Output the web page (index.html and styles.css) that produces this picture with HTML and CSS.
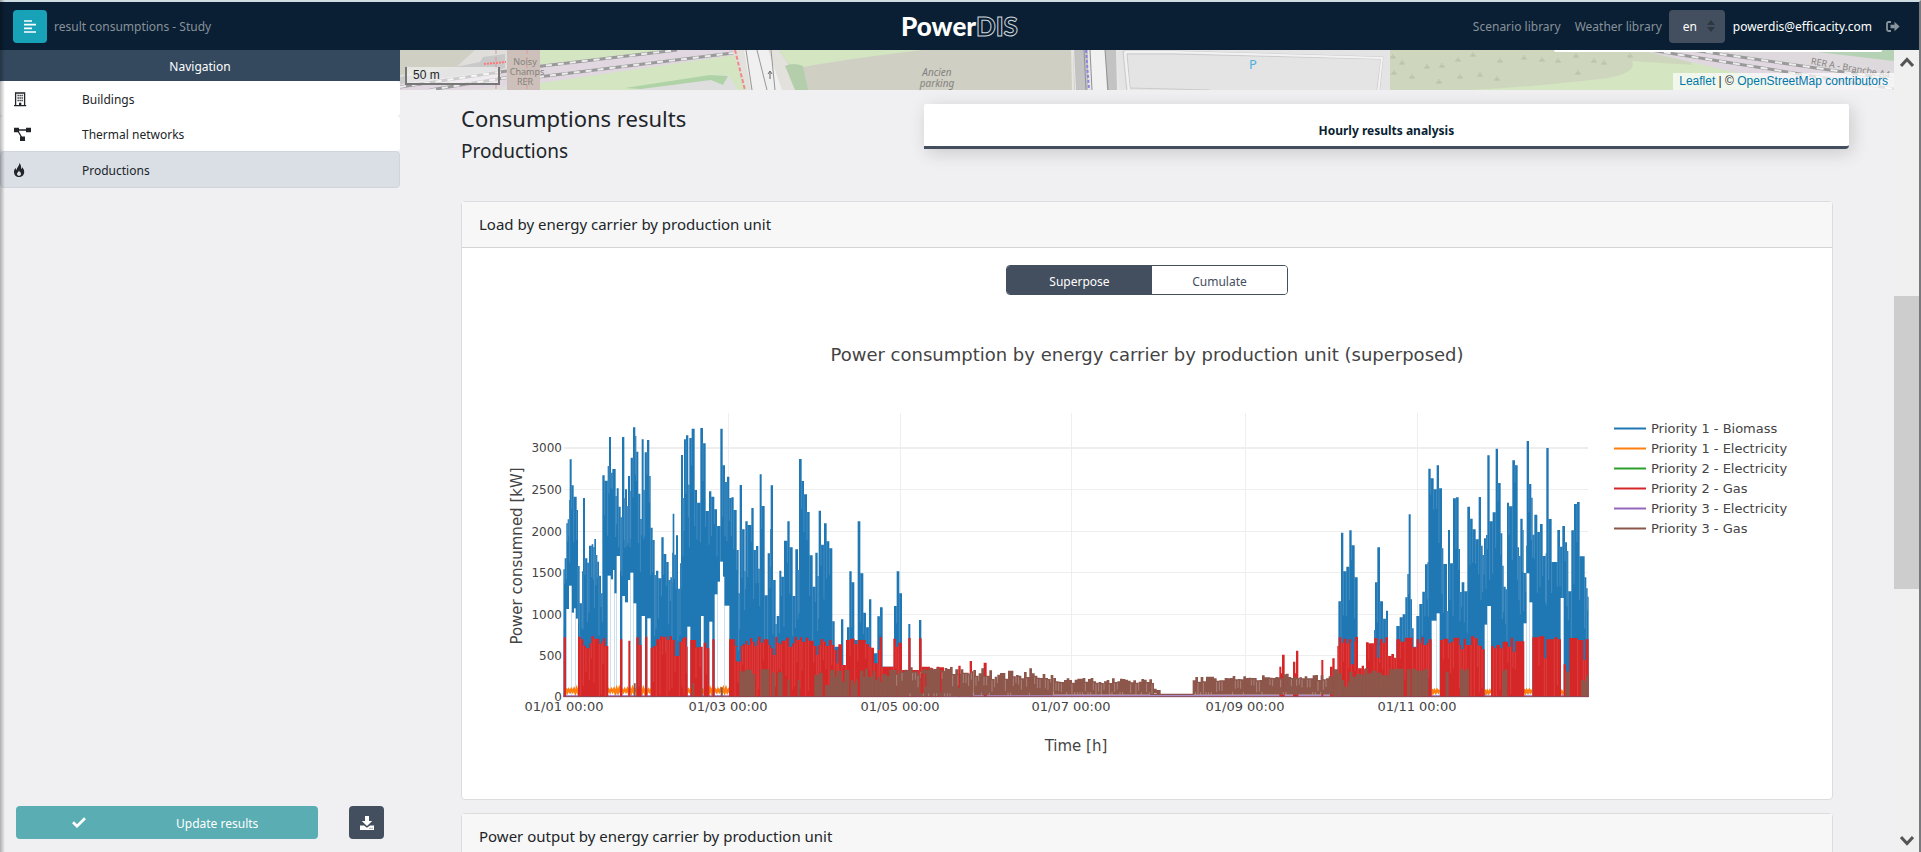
FILE: index.html
```html
<!DOCTYPE html>
<html lang="en">
<head>
<meta charset="utf-8">
<title>PowerDIS - result consumptions</title>
<link rel="stylesheet" href="styles.css">
</head>
<body>
<div class="app">
  <header class="topbar">
    <div class="topbar-left">
      <button class="menu-btn" type="button" aria-label="Toggle navigation">
        <svg width="12" height="13" viewBox="0 0 12 13"><path d="M0 1h8M0 4.7h12M0 8.4h8M0 12h12" stroke="#fff" stroke-width="1.7"/></svg>
      </button>
      <span class="study">result consumptions - Study</span>
    </div>
    <a class="logo" href="#">Power<span class="logo-outline">DIS</span></a>
    <nav class="topbar-right">
      <a href="#">Scenario library</a>
      <a href="#">Weather library</a>
      <span class="lang">
        <select aria-label="Language"><option>en</option><option>fr</option></select>
        <svg class="lang-caret" width="8" height="12" viewBox="0 0 8 12"><path d="M0 5l4-5 4 5zM0 7l4 5 4-5z" fill="#2e3740"/></svg>
      </span>
      <a class="user" href="#">powerdis@efficacity.com</a>
      <a class="logout" href="#" aria-label="Log out">
        <svg width="14" height="12" viewBox="0 0 14 12"><path d="M5 1H2.5A1.5 1.5 0 0 0 1 2.500v6A1.500 1.500 0 0 0 2.500 10H5" fill="none" stroke="#8a949d" stroke-width="1.800"/><path d="M4.500 3.800h4V.8L13.600 5.500 8.500 10.300v-3h-4z" fill="#8a949d"/></svg>
      </a>
    </nav>
  </header>

  <div class="body">
    <aside class="sidebar">
      <h2 class="nav-title">Navigation</h2>
      <nav class="nav-list">
        <a class="nav-item" href="#">
          <svg width="18" height="15" viewBox="0 0 18 15"><path d="M1.600 13.500V1h9v12.500M0 13.700h12.200" fill="none" stroke="#212529" stroke-width="1.300"/><path d="M3.500 3.500h5.300M3.500 6h5.300M3.500 8.500h5.300" stroke="#212529" stroke-width="1.500" stroke-dasharray="1.300 .7"/><path d="M5 14v-3.300h2.300V14z" fill="#212529"/></svg>
          <span>Buildings</span>
        </a>
        <a class="nav-item" href="#">
          <svg width="18" height="15" viewBox="0 0 18 15"><path d="M3 3h11M4 4l4 7" stroke="#212529" stroke-width="1.300"/><path d="M0 .7h5v4.600H0zM12 .7h5v4.600h-5zM6 9.500h5V14H6z" fill="#212529"/></svg>
          <span>Thermal networks</span>
        </a>
        <a class="nav-item active" href="#">
          <svg width="18" height="15" viewBox="0 0 18 15"><path fill-rule="evenodd" d="M5 0C6 2.600 2.800 4 2.600 7 1.700 6.500 1.600 5.500 1.700 4.700.6 6 0 7.300 0 9c0 3 2.200 5 5 5s5.200-2 5.200-5c0-2-1-3.500-2-4.700-.1.900-.5 1.500-1.100 1.800C7.500 3.500 6.800 1 5 0zM5 7.600C5.300 9 7 9.300 7 11c0 1.200-.9 1.800-2 1.800s-2-.7-2-1.800c0-1.500 1.600-2 2-3.400z" fill="#212529"/></svg>
          <span>Productions</span>
        </a>
      </nav>
      <div class="side-actions">
        <button class="update-btn" type="button">
          <svg width="14" height="11" viewBox="0 0 14 11"><path d="M1 5.300l4 3.900L13 1.300" fill="none" stroke="#fff" stroke-width="2.700"/></svg>
          <span>Update results</span>
        </button>
        <button class="download-btn" type="button" aria-label="Download">
          <svg width="14" height="14" viewBox="0 0 14 14"><path d="M5 0h4v5h3.200L7 10 1.800 5H5z" fill="#fff"/><path d="M0 9.500h4l3 2.200 3-2.200h4V14H0z" fill="#fff"/><path d="M9.500 12.300h1M11.600 12.300h1" stroke="#434e5e"/></svg>
        </button>
      </div>
    </aside>

    <main class="main">
      <section class="map" aria-label="Map">
        <svg class="map-tiles" width="100%" height="40" viewBox="0 0 1494 40" preserveAspectRatio="xMinYMin slice">
          <rect width="1494" height="40" fill="#cfcfc4"/>
          <path d="M0 40V25L55 18 75 0h70v40z" fill="#dfdeda"/>
          <path d="M50 18l30-6 3-5 22-3v14L60 33 0 37V27z" fill="#c9c9c9"/>
          <path d="M138 0h196l10 40H138z" fill="#d3e5c1"/>
          <path d="M0 40v-6L136 15 270 0h65v5L140 33 60 40z" fill="#e0d7e0"/>
          <path d="M0 37L107 21M30 40l80-13M134 17L277 0M138 27L333 3" stroke="#999" stroke-width="3" fill="none"/>
          <path d="M0 37L107 21M30 40l80-13M134 17L277 0M138 27L333 3" stroke="#ededed" stroke-width="2" stroke-dasharray="6 6" fill="none"/>
          <path d="M107 0h33v40h-33z" fill="#cdc0ba"/>
          <path d="M127 0v40M96 0v40" stroke="#d99" stroke-dasharray="4 3"/>
          <path d="M235 40l80-15 13 0 10 15z" fill="#dedede"/>
          <path d="M225 38l85-13 18 1-5 9-12-5-70 9z" fill="#afd2a6"/>
          <path d="M84 14l22-2" stroke="#ff7878" stroke-width="2" stroke-dasharray="2 1"/>
          <path d="M333 0h46l27 40h-61z" fill="#e2e1dc"/>
          <path d="M344 0h24l14 40h-31z" fill="#f0f0f0"/>
          <path d="M346 0l6 40M357 0l10 40M371 0l4 40" stroke="#969696" fill="none"/>
          <path d="M335 0l10 40" stroke="#f08a8a" stroke-width="2" stroke-dasharray="4 2"/>
          <path d="M370 29v-7M368 24l2-3 2 3" stroke="#666" fill="none"/>
          <path d="M379 0h144q-70 8-120 17l-10 3z" fill="#d3e5c1"/>
          <path d="M385 16q8-4 18 0l5 24h-13z" fill="#b4ceac"/>
          <path d="M671 0h2l1 40h-2z" fill="#e6e5df"/>
          <path d="M673 0h50v40h-48z" fill="#e8e8e6"/>
          <path d="M674 0h14v40h-12zM705 0h11l1 40h-11z" fill="#c3c3c3"/>
          <path d="M691 0h14l2 40h-15z" fill="#f1f1f1"/>
          <path d="M690 0l2 40M705 0l3 40M684 0l2 40" stroke="#929292" fill="none"/>
          <path d="M686 0l3 40" stroke="#8c83e6" stroke-width="2" stroke-dasharray="3 2"/>
          <path d="M717 0h273v40H719z" fill="#e4e4e4"/>
          <path d="M723 1l50 0 210 6-4 40M723 1l4 42M727 4l46 0 208 5-4 31M727 4l3 34 80 2" fill="none" stroke="#cbcbcb"/>
          <path d="M725 2l48 0 209 6-4 36M725 2l4 40" fill="none" stroke="#f2f2f2" stroke-width="2"/>
          <path d="M990 0h350v40H990z" fill="#ced6bd"/>
          <path d="M1110 40l190-12-10-17 180 12 24 17z" fill="#d3e5c1"/>
          <path d="M1070 40q60-3 130-11 38-5 32-18l155 10-8 19z" fill="#d3e5c1"/>
          <path d="M1240 0h254v40h-80l-90-20z" fill="#ded9dc"/>
          <path d="M1240 0h70l184 33v7h-60z" fill="#e0d7e0"/>
          <path d="M1400 0h94v11z" fill="#b6d2b5"/>
          <path d="M1250 0l244 39M1292 0l200 29" stroke="#999" stroke-width="3"/>
          <path d="M1250 0l244 39M1292 0l200 29" stroke="#ededed" stroke-width="2" stroke-dasharray="7 7"/>
          <g stroke="#b5c2a5" stroke-width="1" fill="none">
            <path id="tree" d="M1002 10v4h-3M1002 14h3M1000 12l2 2 2-2"/>
            <use href="#tree" x="-9" y="-6"/><use href="#tree" x="-8" y="10"/><use href="#tree" x="10" y="14"/><use href="#tree" x="25" y="4"/><use href="#tree" x="40" y="3"/><use href="#tree" x="37" y="19"/><use href="#tree" x="56" y="-3"/><use href="#tree" x="58" y="14"/><use href="#tree" x="71" y="-8"/><use href="#tree" x="78" y="12"/><use href="#tree" x="95" y="16"/><use href="#tree" x="98" y="-2"/><use href="#tree" x="122" y="-5"/><use href="#tree" x="140" y="-3"/><use href="#tree" x="156" y="-2"/><use href="#tree" x="176" y="10"/><use href="#tree" x="192" y="-2"/><use href="#tree" x="174" y="-7"/><use href="#tree" x="202" y="0"/><use href="#tree" x="228" y="-7"/>
          </g>
          <g class="map-label">
            <text x="125" y="15">Noisy</text><text x="127" y="25">Champs</text><text x="125" y="35">RER</text>
            <text class="it" x="537" y="26">Ancien</text><text class="it" x="537" y="37">parking</text>
            <text x="1450" y="21" transform="rotate(10 1450 21)">RER A - Branche A4</text>
          </g>
          <text class="parking" x="853" y="19">P</text>
          <path d="M1154 0h328v1q0 1-2 1h-324q-2 0-2-2z" fill="#fff"/>
        </svg>
        <div class="map-scale">50 m</div>
        <div class="map-credit"><a href="#">Leaflet</a> | © <a href="#">OpenStreetMap contributors</a></div>
      </section>

      <div class="content">
        <div class="heading-row">
          <div>
            <h1>Consumptions results</h1>
            <h2>Productions</h2>
          </div>
          <button class="tab" type="button">Hourly results analysis</button>
        </div>

        <section class="card">
          <h3 class="card-head">Load by energy carrier by production unit</h3>
          <div class="card-body">
            <div class="toggle">
              <button class="on" type="button">Superpose</button>
              <button type="button">Cumulate</button>
            </div>
            <svg class="chart" viewBox="462 295 1370 485" role="img" aria-label="Power consumption by energy carrier by production unit">
              <text class="c-title" x="1147" y="361">Power consumption by energy carrier by production unit (superposed)</text>
              <g stroke="#eee">
                <path d="M728.500 413v284M900.500 413v284M1071.500 413v284M1245.500 413v284M1417.500 413v284M564 489.500h1024M564 531.500h1024M564 572.500h1024M564 614.500h1024M564 655.500h1024"/>
                <path d="M564 448h1024" stroke-width="2"/>
              </g>
              <g id="plot" transform="translate(500 400) scale(.33333)"></g>
              <g class="c-tick end">
                <text x="562" y="452">3000</text><text x="562" y="494">2500</text><text x="562" y="536">2000</text><text x="562" y="577">1500</text><text x="562" y="619">1000</text><text x="562" y="660">500</text><text x="562" y="701">0</text>
              </g>
              <g class="c-tick mid">
                <text x="564" y="711">01/01 00:00</text><text x="728" y="711">01/03 00:00</text><text x="900" y="711">01/05 00:00</text><text x="1071" y="711">01/07 00:00</text><text x="1245" y="711">01/09 00:00</text><text x="1417" y="711">01/11 00:00</text>
              </g>
              <text class="c-axis" x="1076" y="751">Time [h]</text>
              <text class="c-axis" transform="translate(522 556) rotate(-90)">Power consumned [kW]</text>
              <g stroke-width="2">
                <path d="M1614 428.500h32" stroke="#1f77b4"/><path d="M1614 448.500h32" stroke="#ff7f0e"/><path d="M1614 468.500h32" stroke="#2ca02c"/><path d="M1614 488.500h32" stroke="#d62728"/><path d="M1614 508.500h32" stroke="#9467bd"/><path d="M1614 528.500h32" stroke="#8c564b"/>
              </g>
              <g class="c-tick">
                <text x="1651" y="433">Priority 1 - Biomass</text><text x="1651" y="453">Priority 1 - Electricity</text><text x="1651" y="473">Priority 2 - Electricity</text><text x="1651" y="493">Priority 2 - Gas</text><text x="1651" y="513">Priority 3 - Electricity</text><text x="1651" y="533">Priority 3 - Gas</text>
              </g>
            </svg>
          </div>
        </section>

        <section class="card">
          <h3 class="card-head">Power output by energy carrier by production unit</h3>
          <div class="card-body"></div>
        </section>
      </div>
    </main>

    <div class="scroll" aria-hidden="true">
      <svg width="14" height="10" viewBox="0 0 14 10"><path d="M1 9l6-6.500L13 9" fill="none" stroke="#555" stroke-width="3"/></svg>
      <div class="scroll-track"><div class="scroll-thumb"></div></div>
      <svg width="14" height="10" viewBox="0 0 14 10"><path d="M1 1l6 6.500L13 1" fill="none" stroke="#555" stroke-width="3"/></svg>
    </div>
  </div>
</div>
<script src="chart.js"></script>
</body>
</html>
```
FILE: styles.css
```css
* { box-sizing: border-box; }

body {
  margin: 0;
  background: #f0f0f2;
  color: #212529;
  font: 12px/20px "Noto Sans", "Open Sans", sans-serif;
}

a { color: inherit; text-decoration: none; }
button { font: inherit; cursor: pointer; border: 0; }
h1, h2, h3 { margin: 0; font-weight: 400; }
svg { display: block; flex: none; }

.app {
  display: flex;
  flex-direction: column;
  height: 100vh;
  overflow: hidden;
  border-top: 2px solid #cfdde2;
  border-right: 2px solid #77797c;
}

.app::after {
  content: "";
  position: fixed;
  inset: 0 auto 0 0;
  width: 5px;
  background: linear-gradient(90deg, rgba(0, 0, 0, .28), rgba(0, 0, 0, 0));
  pointer-events: none;
}

.topbar {
  display: grid;
  grid-template-columns: 1fr auto 1fr;
  align-items: center;
  flex: none;
  height: 48px;
  padding: 0 19px 0 13px;
  background: #0a1f33;
  color: #87919a;
}

.topbar-left { display: flex; align-items: center; gap: 7px; }
.topbar-left .study, .topbar-right > a { padding-top: 2px; }
.topbar-right { display: flex; align-items: center; justify-content: flex-end; }
.topbar-right > a { margin-right: 14px; }
.topbar-right > a:nth-child(2) { margin-right: 7px; }

.menu-btn {
  display: flex;
  align-items: center;
  justify-content: center;
  width: 34px;
  height: 33px;
  padding: 0;
  border-radius: 4px;
  background: #17a2b8;
}

.logo {
  margin-left: 6px;
  color: #fff;
  font: 900 26px/30px Lato, sans-serif;
}

.logo-outline {
  color: transparent;
  -webkit-text-stroke: 1px #ccd4d9;
}

.lang { position: relative; margin-right: 8px; }

.lang select {
  display: block;
  width: 56px;
  height: 33px;
  padding: 2px 14px 0;
  border: 0;
  border-radius: 4px;
  appearance: none;
  background: #434e5e;
  color: #fff;
  font: inherit;
}

.lang-caret { position: absolute; right: 10px; top: 10px; pointer-events: none; }
.topbar-right > .user { color: #fff; }
.topbar-right > .logout { margin-right: 0; }

.body { display: flex; flex: 1; min-height: 0; }

.sidebar { display: flex; flex-direction: column; flex: 0 0 400px; }

.nav-title {
  padding: 7px 0 4px;
  background: #34495e;
  color: #fff;
  font-size: 12px;
  line-height: 20px;
  text-align: center;
}

.nav-item {
  display: flex;
  align-items: center;
  gap: 50px;
  height: 35px;
  padding: 2px 14px 0;
  border-radius: 4px;
  background: #fff;
}

.nav-item.active {
  height: 37px;
  border: 1px solid #cfd4dd;
  padding: 2px 13px 0;
  background: #dadfe6;
}

.side-actions {
  display: flex;
  gap: 31px;
  margin-top: auto;
  padding: 0 16px 13px;
}

.update-btn {
  display: flex;
  align-items: center;
  width: 302px;
  height: 33px;
  padding: 0 0 0 56px;
  border-radius: 4px;
  background: #5aadb3;
  color: #fff;
  gap: 90px;
}

.update-btn span { padding-top: 3px; }

.download-btn {
  display: grid;
  place-items: center;
  width: 35px;
  height: 33px;
  padding: 0;
  border-radius: 4px;
  background: #434e5e;
}

.main { flex: 1; min-width: 0; overflow: hidden; }

.map { position: relative; height: 40px; overflow: hidden; }

.map-label { font: 9px "Noto Sans", sans-serif; fill: #85827e; text-anchor: middle; }
.map-label .it { font-size: 10px; font-style: italic; }
.parking { font: 13px "Noto Sans", sans-serif; fill: #4fb0dc; text-anchor: middle; }

.map-scale {
  position: absolute;
  left: 5px;
  bottom: 5px;
  width: 95px;
  height: 18px;
  padding: 0 6px;
  border: 2px solid #777;
  border-top: 0;
  background: rgba(255, 255, 255, .5);
  font: 12px/17px "Liberation Sans", sans-serif;
}

.map-credit {
  position: absolute;
  right: 0;
  bottom: 0;
  padding: 0 6px;
  background: rgba(255, 255, 255, .7);
  font: 12px/17px "Liberation Sans", sans-serif;
}

.map-credit a { color: #0078a8; }

.content { padding: 14px 61px 0; }

.heading-row {
  display: grid;
  grid-template-columns: 1fr 2fr;
  align-items: start;
  height: 97px;
  margin-right: -16px;
}

h1 { font-size: 22px; line-height: 28px; }
.heading-row h2 { font-size: 19px; line-height: 38px; }

.tab {
  height: 45px;
  padding: 11px 0 0;
  border-bottom: 3px solid #434e5e;
  border-radius: 2px 2px 4px 0;
  background: #fff;
  box-shadow: 3px 4px 18px rgba(0, 0, 0, .16);
  color: #0a1f33;
  font-weight: 700;
}

.card {
  margin-bottom: 13px;
  border: 1px solid #dcdcde;
  border-radius: 4px;
  background: #fff;
}

.card-head {
  padding: 10px 17px;
  border-bottom: 1px solid #d5d5d7;
  background: #f7f7f7;
  font-size: 15px;
  line-height: 25px;
}

.card-body { padding: 17px 0 19px; }

.toggle {
  display: flex;
  width: 282px;
  margin: 0 auto;
  border: 1px solid #434e5e;
  border-radius: 4px;
  overflow: hidden;
}

.toggle button {
  flex: 1 1 135px;
  height: 28px;
  padding: 3px 0 0;
  background: #fff;
  color: #434e5e;
}

.toggle .on { flex-basis: 145px; background: #434e5e; color: #fff; }

.chart { width: 100%; height: auto; font-family: Verdana, "DejaVu Sans", sans-serif; fill: #444; }
.c-title { font-size: 18px; text-anchor: middle; }
.c-tick { font-size: 13px; }
.c-axis { font-size: 15px; text-anchor: middle; }
.end { text-anchor: end; font-size: 12px; }
.mid { text-anchor: middle; }

.scroll {
  display: flex;
  flex-direction: column;
  align-items: center;
  flex: 0 0 25px;
  padding: 7px 0 6px;
  background: #f0f0f0;
}

.scroll-track { flex: 1; width: 100%; padding-top: 229px; }
.scroll-thumb { height: 293px; background: #cdcdcd; }
```
FILE: chart.js
```javascript
// Each series is a list of "x top" steps; a step runs until the next one.
// Units are thirds of a pixel, and the time axis sits at y = BASE.
const BASE = 890;
const NS = 'http://www.w3.org/2000/svg';
const plot = document.getElementById('plot');

function path(d, attrs) {
  const el = document.createElementNS(NS, 'path');
  el.setAttribute('d', d);
  for (const k in attrs) el.setAttribute(k, attrs[k]);
  plot.appendChild(el);
}

function parse(text, dx) {
  return text.trim().split(/\s*,\s*/).map(p => {
    const [x, y] = p.split(' ').map(Number);
    return [x + dx, y];
  });
}

function steps(text, dx, fill, streak) {
  const pts = parse(text, dx);
  let d = `M${pts[0][0]} ${BASE}`;
  let s = '';
  pts.forEach(([x, y], i) => {
    d += `H${x}V${y}`;
    const low = i ? Math.max(y, pts[i - 1][1]) : y;
    const len = 40 + (x * 37 + y * 13) % 150;
    if (low < BASE - 20) s += `M${x} ${low}V${Math.min(low + len, BASE)}`;
  });
  path(d + `V${BASE}Z`, { fill });
  if (streak) path(s, { stroke: streak, 'stroke-width': 2, opacity: .4 });
}

// Areas left open below the lower edge of the biomass series: x0 x1 bottom
function gaps(text, dx) {
  text.trim().split(/\s*,\s*/).forEach(g => {
    const [a, b, y] = g.split(' ').map(Number);
    path(`M${a + dx} ${y}H${b + dx}V${BASE}H${a + dx}Z`, { fill: '#fff' });
  });
}

function wave(a, b, mid) {
  let d = '';
  for (let x = a, i = 0; x <= b; x += 4, i++) {
    d += `${i ? 'L' : 'M'}${x} ${mid + (i % 2 ? 5 : -5) + (i * 7) % 5 - 2}`;
  }
  path(d, { stroke: '#ff7f0e', 'stroke-width': 7, fill: 'none' });
}

// Dense bars with tops scattered round a sloping level
function band(a, b, y0, y1, fill, spread, bottom) {
  let d = `M${a} ${bottom}`;
  let light = '';
  for (let x = a, i = 0; x < b; x += 8, i++) {
    const r = Math.abs(Math.sin(i * 12.9898 + a) * 43758.5453) % 1;
    const y = Math.round(y0 + (y1 - y0) * (x - a) / (b - a) + (r - .5) * spread);
    d += `H${x}V${y}`;
    if (r > .5) light += `M${x} ${y + 4}v${Math.round(r * 35)}`;
    if (r < .3) light += `M${x} ${bottom}v-8`;
  }
  path(d + `H${b}V${bottom}Z`, { fill });
  path(light, { stroke: '#d8c6c2', 'stroke-width': 2, opacity: .6 });
}

const BLUE = '#1f77b4', RED = '#d62728', BROWN = '#8c564b';

steps(`190 508,194 475,199 370,203 358,207 300,209 178,215 256,221 290,230 330,234 498,239 610,246 514,249 294,255 475,262 488,267 437,275 433,280 442,283 417,288 465,292 485,297 527,303 580,307 226,314 242,323 198,327 111,333 218,337 207,347 288,350 265,356 320,362 352,366 111,373 295,375 268,381 318,384 228,390 273,392 173,399 82,406 108,409 155,415 281,421 357,425 118,431 270,434 157,441 120,448 228,452 383,458 420,464 525,468 512,475 535,484 412,491 462,499 486,506 540,511 532,516 458,518 341,523 464,528 406,534 566,540 490,543 165,549 294,552 118,558 106,565 254,568 114,575 86,584 270,591 308,601 84,609 130,617 333,627 274,634 290,643 328,651 378,661 86,668 196,675 246,681 230,688 294,694 292,701 330,710 450,716 580,719 255,726 388,734 513,736 364,743 375,754 324,761 450,768 438,775 506,779 223,785 318,794 586,803 460,810 388,812 256,819 540,827 672,830 648,838 512,844 530,852 422,862 364,869 442,878 588,886 448,894 510,897 177,905 243,912 283,921 336,929 466,938 560,946 458,953 528,956 332,963 434,972 370,980 424,988 445,997 664,1004 740,1023 658,1030 800,1041 682,1048 514,1055 547,1063 720,1073 364,1081 520,1090 638,1098 682,1107 598,1114 760,1132 649,1140 622,1148 800,1182 618,1190 514,1198 580,1206 835,1225 672,1231 835,1257 660,1264 890`, 0, BLUE, '#a9cbe4');
steps(`175 604,183 398,190 514,199 500,208 391,215 436,224 532,233 890,282 690,285 547,292 442,300 604,309 656,318 632,324 890,349 678,359 652,368 643,376 592,382 522,386 343,392 598,396 685,401 740,409 648,418 612,427 575,435 493,442 487,445 206,452 235,461 268,470 196,477 265,486 445,490 492,501 633,504 390,510 490,519 295,528 292,536 447,540 576,545 547,553 574,562 320,570 356,578 388,587 418,596 291,603 437,608 465,612 415,618 405,622 166,629 364,638 337,647 146,654 249,662 400,667 497,671 560,677 568,681 308,687 319,697 181,705 196,713 442,717 468,721 356,728 390,731 519,738 437,740 123,747 252,754 293,758 404,763 344,772 396,780 372,788 468,797 460,799 144,806 357,815 486,832 390,840 440,847 378,855 427,861 453,865 574,874 391,882 312,891 306,899 469,914 532,919 565,923 590,926 890`, 2340, BLUE, '#a9cbe4');

gaps(`199 207 627,207 215 557,215 222 638,222 227 625,227 234 656,323 332 527,332 339 538,339 343 510,343 350 580,350 360 468,367 375 588,375 384 607,384 391 540,391 400 518,400 409 610,425 435 648,442 452 655,562 571 680,603 611 648,628 637 665,644 653 583,653 660 545,660 669 485,669 673 530,673 688 617`, 0);
gaps(`455 470 662,470 479 640,614 622 674,622 633 618,731 740 670,740 748 520,748 757 607,842 851 594`, 2340);

wave(198, 690, 872);
wave(2795, 2822, 874);
wave(2954, 2974, 876);
wave(3072, 3098, 874);
wave(3183, 3192, 876);

path(`M190 888H3266`, { stroke: '#9467bd', 'stroke-width': 5 });

steps(`191 712,198 890,234 710,242 718,250 737,258 745,268 730,274 709,282 716,298 732,304 724,309 715,316 738,325 890,360 718,367 890,385 722,391 890,409 712,417 735,425 890,435 710,442 890,452 743,460 738,469 718,480 709,488 712,497 709,501 720,508 709,516 720,525 768,538 725,546 715,552 712,560 740,563 890,571 720,588 742,600 740,608 890,611 728,619 745,628 890,637 718,644 890,687 718,705 738,714 785,722 738,728 733,737 722,742 735,750 714,757 725,764 738,771 722,775 710,782 728,790 718,806 735,812 745,820 765,826 711,832 728,838 733,844 722,858 713,867 740,877 730,884 710,891 720,900 712,906 725,917 713,925 722,941 738,950 765,955 735,961 718,970 725,978 738,987 720,995 735,1003 750,1011 790,1015 733,1026 795,1038 720,1050 716,1064 732,1073 720,1097 732,1107 740,1113 743,1122 790,1134 750,1139 712,1146 800,1180 716,1188 740,1195 728,1206 810,1225 714,1232 810,1257 715,1265 800,1290 805,1300 815,1310 800,1318 890`, 0, RED, '#e98081');
steps(`31 803,37 890,50 802,72 890,115 797,122 890,149 783,156 890,191 788,200 890,1078 800,1084 820,1086 764,1094 890,1119 785,1126 820,1128 752,1135 890`, 1260, RED, '');
steps(`124 780,130 890,150 800,157 775,164 890,172 738,176 712,184 728,190 716,200 730,206 718,214 725,225 711,234 805,245 797,252 808,258 727,266 730,282 714,292 735,299 717,308 728,316 712,324 768,334 762,342 773,349 718,361 725,375 713,398 742,410 718,418 730,424 712,431 735,440 728,446 718,455 890,480 720,490 716,505 730,512 725,520 713,538 735,543 748,551 716,558 735,573 709,583 715,593 735,598 738,606 748,614 890,633 738,641 745,649 735,660 745,668 725,684 740,692 713,699 755,706 724,733 890,757 712,777 709,793 775,799 718,823 712,832 718,843 890,851 793,858 815,868 714,893 720,910 780,916 718,926 890`, 2340, RED, '#e98081');

// Biomass still visible where the gas series dips
path(`M2552 725h10v68h-10zM2631 735h7v38h-7zM708 740h6v44h-6zM820 745h5v20h-5zM530 745h6v22h-6z`, { fill: BLUE });

steps(`402 850,407 890,577 850,583 890,604 865,608 890,662 862,668 890,718 812,728 817,734 809,756 822,765 890,782 808,808 890,815 818,825 890,833 817,848 890,862 838,869 890,893 840,899 890,943 825,956 818,968 890,975 855,990 810,1005 830,1010 812,1025 845,1033 810,1048 890,1052 840,1060 850,1068 838,1073 890,1080 812,1090 830,1095 806,1104 830,1118 812,1126 840,1133 830,1140 845,1145 822,1160 828,1168 810,1190 806`, 0, BROWN, '#a5554a');
band(1190, 1420, 812, 812, BROWN, 22, 888);
band(1420, 1660, 818, 825, BROWN, 36, 886);
band(1660, 1962, 842, 842, BROWN, 16, 884);
path(`M1262 820h8v60h-8zM1275 820h4v40h-4zM1376 808h4v56h-4zM1320 815h4v60h-4z`, { fill: RED });
path(`M1962 868h6v10h-6zM1972 872h8v10h-8zM1950 883H2082`, { fill: BROWN, stroke: BROWN, 'stroke-width': 4 });
band(2078, 2350, 838, 832, BROWN, 16, 884);
band(2350, 2500, 832, 832, BROWN, 22, 884);
steps(`160 808,175 820,185 840,193 860,203 845,208 815,218 830,228 822,245 824,254 805,262 820,275 812,290 818,305 826,328 808,345 806,371 890,381 808,392 890,395 806,410 812,430 808,445 890,497 815,506 890,540 808,550 812,560 806,567 890,608 890,667 812,675 808,682 890,857 815,869 890,903 840,914 845,918 826,926 890`, 2340, BROWN, '#a5554a');
path(`M190 890H3266`, { stroke: '#874a55', 'stroke-width': 3 });
```
